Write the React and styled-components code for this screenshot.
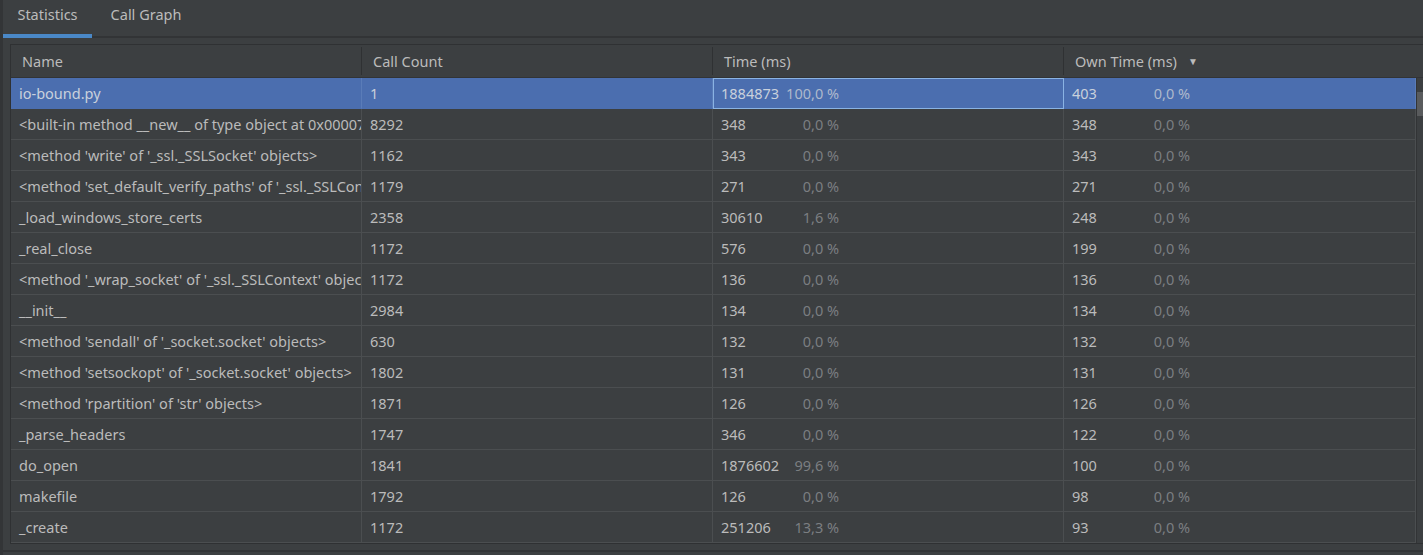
import React from "react";
import styled, { createGlobalStyle } from "styled-components";

const GlobalStyle = createGlobalStyle`
  html, body {
    margin: 0;
    padding: 0;
    background: #3c3f41;
    overflow: hidden;
  }
  body {
    font-family: "Noto Sans", "Open Sans", sans-serif;
    font-size: 14.5px;
    color: #bbbbbb;
  }
`;

const rows = [
  { name: "io-bound.py", count: "1", time: "1884873", timePct: "100,0 %", own: "403", ownPct: "0,0 %" },
  { name: "<built-in method __new__ of type object at 0x00007FFB5E0C1D20>", count: "8292", time: "348", timePct: "0,0 %", own: "348", ownPct: "0,0 %" },
  { name: "<method 'write' of '_ssl._SSLSocket' objects>", count: "1162", time: "343", timePct: "0,0 %", own: "343", ownPct: "0,0 %" },
  { name: "<method 'set_default_verify_paths' of '_ssl._SSLContext' objects>", count: "1179", time: "271", timePct: "0,0 %", own: "271", ownPct: "0,0 %" },
  { name: "_load_windows_store_certs", count: "2358", time: "30610", timePct: "1,6 %", own: "248", ownPct: "0,0 %" },
  { name: "_real_close", count: "1172", time: "576", timePct: "0,0 %", own: "199", ownPct: "0,0 %" },
  { name: "<method '_wrap_socket' of '_ssl._SSLContext' objects>", count: "1172", time: "136", timePct: "0,0 %", own: "136", ownPct: "0,0 %" },
  { name: "__init__", count: "2984", time: "134", timePct: "0,0 %", own: "134", ownPct: "0,0 %" },
  { name: "<method 'sendall' of '_socket.socket' objects>", count: "630", time: "132", timePct: "0,0 %", own: "132", ownPct: "0,0 %" },
  { name: "<method 'setsockopt' of '_socket.socket' objects>", count: "1802", time: "131", timePct: "0,0 %", own: "131", ownPct: "0,0 %" },
  { name: "<method 'rpartition' of 'str' objects>", count: "1871", time: "126", timePct: "0,0 %", own: "126", ownPct: "0,0 %" },
  { name: "_parse_headers", count: "1747", time: "346", timePct: "0,0 %", own: "122", ownPct: "0,0 %" },
  { name: "do_open", count: "1841", time: "1876602", timePct: "99,6 %", own: "100", ownPct: "0,0 %" },
  { name: "makefile", count: "1792", time: "126", timePct: "0,0 %", own: "98", ownPct: "0,0 %" },
  { name: "_create", count: "1172", time: "251206", timePct: "13,3 %", own: "93", ownPct: "0,0 %" },
];

const Frame = styled.div`
  width: 1423px;
  height: 555px;
  display: flex;
  flex-direction: column;
  border-left: 3px solid #333537;
  box-sizing: border-box;
  overflow: hidden;
`;

const TabBar = styled.div`
  height: 36px;
  display: flex;
  align-items: stretch;
  border-bottom: 2px solid #323436;
  flex-shrink: 0;
`;

const Tab = styled.div`
  display: flex;
  align-items: center;
  padding-bottom: 6px;
  box-sizing: border-box;
  width: ${p => p.$w}px;
  justify-content: center;
  color: #bbbbbb;
  border-bottom: 4px solid ${p => (p.$active ? "#4a88c7" : "transparent")};
  margin-bottom: -2px;
`;

const Body = styled.div`
  flex: 1;
  padding: 6px 0 0 7px;
  display: flex;
  flex-direction: column;
  border-bottom: 2px solid #323436;
  margin-bottom: 3px;
`;

const TableBox = styled.div`
  border: 1px solid #2f3133;
  border-right: none;
  display: flex;
  flex-direction: column;
  width: 1420px;
`;

const Grid = styled.div`
  display: grid;
  grid-template-columns: 351px 351px 351px 352px 7px;
`;

const HeadCell = styled.div`
  height: 33px;
  display: flex;
  align-items: center;
  padding-left: ${p => (p.$blank ? 0 : 11)}px;
  box-sizing: border-box;
  color: #bbbbbb;
  background: #3c3f41;
  border-bottom: 1px solid #323436;
  position: relative;
  &::after {
    content: "";
    position: absolute;
    right: 0;
    top: 2px;
    bottom: 2px;
    width: 1px;
    background: ${p => (p.$last ? "transparent" : "#2f3133")};
  }
`;

const SortArrow = styled.span`
  margin-left: 11px;
  font-size: 10px;
  color: #bbbbbb;
`;

const Cell = styled.div`
  height: 31px;
  display: flex;
  align-items: center;
  padding-left: ${p => p.$pad ?? 8}px;
  box-sizing: border-box;
  white-space: nowrap;
  overflow: hidden;
  color: ${p => (p.$sel ? "#c9d1dc" : "#bbbbbb")};
  background: ${p => (p.$sel ? "#4b6eaf" : "#3c3f41")};
  border-bottom: 1px solid ${p => (p.$sel ? "#4b6eaf" : "#4b4e50")};
  border-right: 1px solid ${p => (p.$sel ? "#5a7cb8" : "#4b4e50")};
  outline: ${p => (p.$focus ? "1px solid #8ab3e3" : "none")};
  outline-offset: -1px;
`;

const Pair = styled.div`
  width: 118px;
  display: flex;
  justify-content: space-between;
`;

const Pct = styled.span`
  color: ${p => (p.$sel ? "#aeb9cc" : "#7b7e81")};
`;

const ScrollTrack = styled.div`
  grid-column: 5;
  grid-row: 2 / span 15;
  border-left: 1px solid #323436;
  background: #3c3f41;
  padding-top: 14px;
`;

const Thumb = styled.div`
  height: 24px;
  background: #595b5d;
`;

function Stat({ value, pct, sel }) {
  return (
    <Pair>
      <span>{value}</span>
      <Pct $sel={sel}>{pct}</Pct>
    </Pair>
  );
}

export default function App() {
  return (
    <>
      <GlobalStyle />
      <Frame>
        <TabBar>
          <Tab $active $w={89}>Statistics</Tab>
          <Tab $w={108}>Call Graph</Tab>
        </TabBar>
        <Body>
          <TableBox>
            <Grid>
              <HeadCell>Name</HeadCell>
              <HeadCell>Call Count</HeadCell>
              <HeadCell>Time (ms)</HeadCell>
              <HeadCell $last>
                Own Time (ms)<SortArrow>▼</SortArrow>
              </HeadCell>
              <HeadCell $last $blank />
              {rows.map((r, i) => {
                const sel = i === 0;
                return (
                  <React.Fragment key={i}>
                    <Cell $sel={sel} $pad={8} style={{ gridColumn: 1 }}>{r.name}</Cell>
                    <Cell $sel={sel}>{r.count}</Cell>
                    <Cell $sel={sel} $focus={sel}>
                      <Stat value={r.time} pct={r.timePct} sel={sel} />
                    </Cell>
                    <Cell $sel={sel}>
                      <Stat value={r.own} pct={r.ownPct} sel={sel} />
                    </Cell>
                  </React.Fragment>
                );
              })}
              <ScrollTrack>
                <Thumb />
              </ScrollTrack>
            </Grid>
          </TableBox>
        </Body>
      </Frame>
    </>
  );
}
